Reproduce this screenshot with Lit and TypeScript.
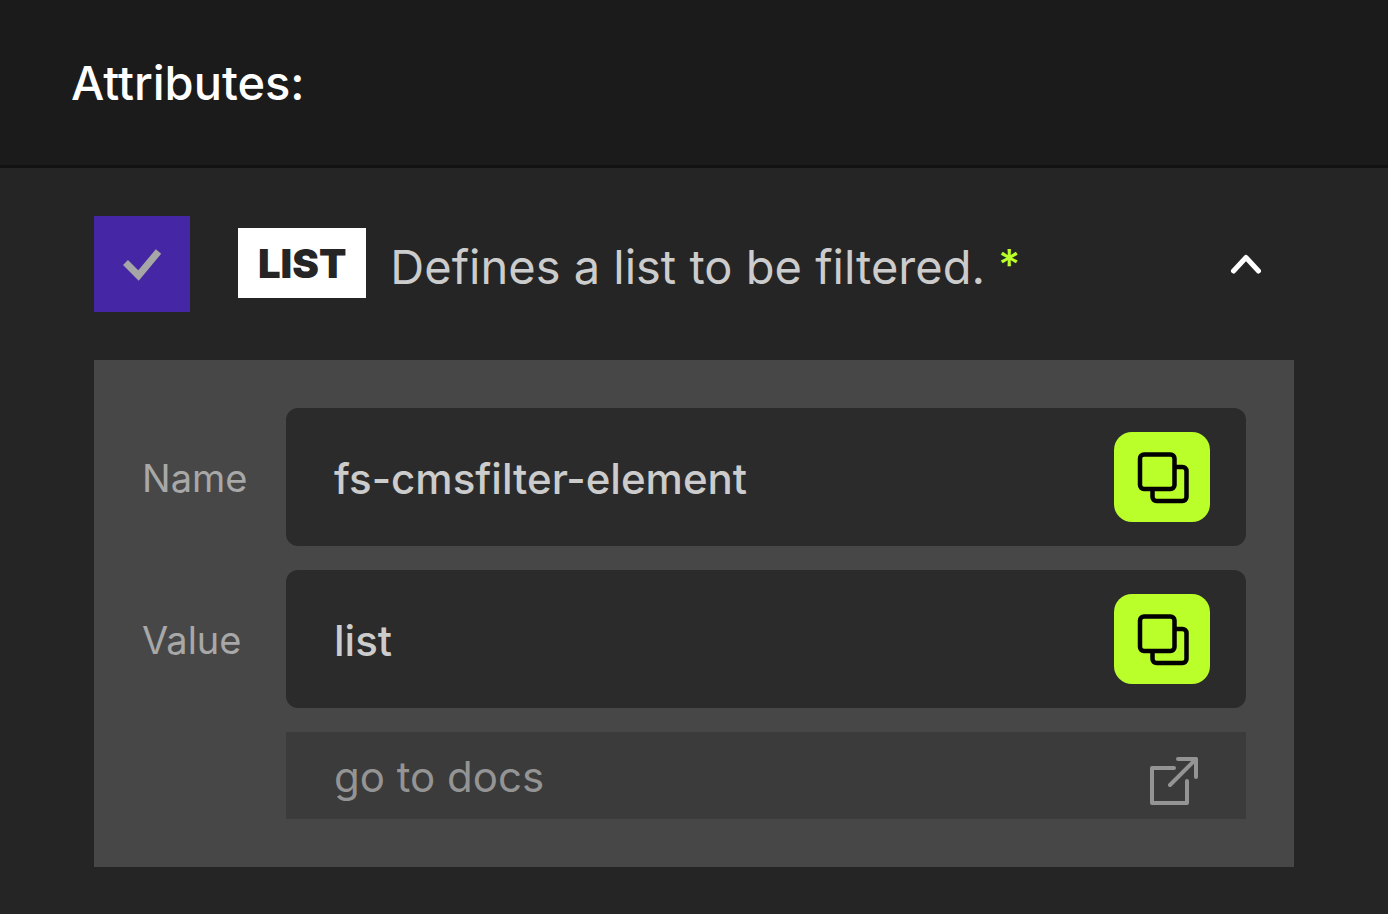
import { LitElement, html, css, svg } from "lit";
import { customElement, property, state } from "lit/decorators.js";

@customElement("copy-field")
class CopyField extends LitElement {
  static styles = css`
    :host {
      display: block;
    }
    .row {
      display: grid;
      grid-template-columns: 144px 1fr;
      align-items: center;
    }
    .label {
      padding-top: 2px;
      font-size: 38px;
      line-height: 48px;
      color: #a8a8a8;
    }
    .box {
      display: flex;
      align-items: center;
      gap: 24px;
      padding: 24px 36px 24px 48px;
      border-radius: 12px;
      background: #2b2b2b;
    }
    .value {
      flex: 1;
      min-width: 0;
      padding: 4px 0 0;
      border: 0;
      outline: 0;
      background: transparent;
      color: #cccccc;
      font: inherit;
      font-size: 42px;
      font-weight: 500;
      line-height: 54px;
    }
    .copy {
      display: grid;
      place-items: center;
      flex: none;
      width: 96px;
      height: 90px;
      padding: 0;
      border: 0;
      border-radius: 18px;
      background: #baff29;
      color: #000000;
      cursor: pointer;
    }
    .copy svg {
      display: block;
    }
  `;

  @property() name = "";
  @property() value = "";

  private copy() {
    navigator.clipboard?.writeText(this.value);
  }

  render() {
    return html`
      <div class="row">
        <label class="label" for="value">${this.name}</label>
        <div class="box">
          <input class="value" id="value" type="text" readonly .value=${this.value} />
          <button class="copy" type="button" aria-label="Copy ${this.name}" @click=${this.copy}>
            <svg width="54" height="54" viewBox="0 0 54 54" fill="none" stroke="currentColor" stroke-width="4.5">
              <rect x="5" y="4.500" width="34.500" height="34.500" rx="4" />
              <path d="M39.500 17h8a4 4 0 0 1 4 4v26a4 4 0 0 1-4 4h-26a4 4 0 0 1-4-4v-8" />
            </svg>
          </button>
        </div>
      </div>
    `;
  }
}

@customElement("app-root")
class AppRoot extends LitElement {
  static styles = css`
    :host {
      display: block;
      min-height: 100vh;
      background: #252525;
      color: #cccccc;
      font-family: Inter, "Liberation Sans", sans-serif;
    }
    .header {
      padding: 53px 71px 52px;
      border-bottom: 3px solid #121212;
      background: #1b1b1b;
    }
    .title {
      margin: 0;
      font-size: 47px;
      line-height: 60px;
      font-weight: 500;
      color: #ffffff;
    }
    .item {
      padding: 48px 94px;
    }
    .summary {
      display: flex;
      align-items: center;
      margin-bottom: 48px;
    }
    .check {
      display: grid;
      flex: none;
      margin-right: 48px;
    }
    .check-input,
    .check-mark {
      grid-area: 1 / 1;
      width: 96px;
      height: 96px;
      margin: 0;
    }
    .check-input {
      appearance: none;
      background: #3a3a3a;
      cursor: pointer;
    }
    .check-input:checked {
      background: #4527a5;
    }
    .check-mark {
      pointer-events: none;
    }
    .check-input:not(:checked) + .check-mark {
      visibility: hidden;
    }
    .tag {
      flex: none;
      margin: 0 24px 2px 0;
      padding: 12px 20px 10px;
      background: #ffffff;
      color: #252525;
      font-size: 40px;
      line-height: 48px;
      font-weight: 900;
    }
    .description {
      flex: 1;
      padding-top: 6px;
      font-size: 47px;
      line-height: 60px;
      cursor: pointer;
    }
    .required {
      color: #baff29;
      font-size: 42px;
      font-weight: 500;
      line-height: 0;
      vertical-align: 4px;
    }
    .toggle {
      display: grid;
      place-items: center;
      flex: none;
      width: 96px;
      height: 96px;
      padding: 0;
      border: 0;
      background: transparent;
      color: #ffffff;
      cursor: pointer;
    }
    .panel {
      display: grid;
      gap: 24px;
      padding: 48px;
      background: #474747;
    }
    .docs {
      display: flex;
      align-items: flex-start;
      justify-content: space-between;
      margin-left: 144px;
      padding: 18px 48px 14px;
      background: #3b3b3b;
      color: #949494;
      font-size: 42px;
      line-height: 54px;
      text-decoration: none;
    }
    .docs-icon {
      display: block;
      margin-top: 7px;
    }
  `;

  @state() private open = true;

  private toggle() {
    this.open = !this.open;
  }

  render() {
    return html`
      <header class="header"><h1 class="title">Attributes:</h1></header>
      <section class="item">
        <div class="summary">
          <span class="check">
            <input class="check-input" id="use-list" type="checkbox" checked />
            <svg class="check-mark" viewBox="0 0 96 96" fill="none" stroke="#a6a6a6" stroke-width="7">
              <path d="M31.500 46.500L44.500 59.500L64.500 35.500" />
            </svg>
          </span>
          <span class="tag">LIST</span>
          <label class="description" for="use-list"
            >Defines a list to be filtered. <span class="required">*</span></label
          >
          <button class="toggle" type="button" aria-label="Toggle details" aria-expanded=${this.open} @click=${this.toggle}>
            <svg width="36" height="24" viewBox="0 0 36 24" fill="none" stroke="currentColor" stroke-width="5" stroke-linecap="round" stroke-linejoin="round">
              ${this.open ? svg`<path d="M5.500 19L18 5.500L30.500 19" />` : svg`<path d="M5.500 5.500L18 19L30.500 5.500" />`}
            </svg>
          </button>
        </div>
        ${this.open
          ? html`
              <div class="panel">
                <copy-field name="Name" value="fs-cmsfilter-element"></copy-field>
                <copy-field name="Value" value="list"></copy-field>
                <a class="docs" href="#docs">
                  go to docs
                  <svg class="docs-icon" width="48" height="48" viewBox="0 0 48 48" fill="none" stroke="currentColor" stroke-width="4" stroke-linecap="round" stroke-linejoin="round">
                    <path d="M24 11H2V46H37V24M28 2H46V20M46 2L20 28" />
                  </svg>
                </a>
              </div>
            `
          : null}
      </section>
    `;
  }
}
